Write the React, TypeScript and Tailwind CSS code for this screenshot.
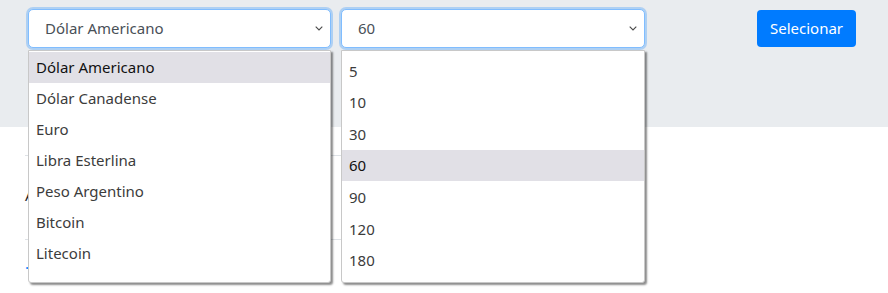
import { useState } from 'react';

const moedas = [
  'Dólar Americano',
  'Dólar Canadense',
  'Euro',
  'Libra Esterlina',
  'Peso Argentino',
  'Bitcoin',
  'Litecoin',
];

const dias = ['5', '10', '30', '60', '90', '120', '180'];

function Chevron() {
  return (
    <svg width="8" height="5" viewBox="0 0 8 5" className="shrink-0">
      <path d="M0.7 0.7 L4 4 L7.3 0.7" fill="none" stroke="#4a4a4a" strokeWidth="1.1" />
    </svg>
  );
}

interface SelectProps {
  value: string;
  options: string[];
  widthClass: string;
  listPad: string;
  itemH: string;
}

function FakeSelect({ value, options, widthClass, listPad, itemH }: SelectProps) {
  const [selected] = useState(value);
  return (
    <div className={`relative ${widthClass}`}>
      <div className="flex h-[39px] items-center justify-between rounded-[5px] border border-[#80bdff] bg-white pl-[16px] pr-[7px] text-[15px] text-[#495057] shadow-[0_0_0_2px_rgba(0,123,255,0.25)]">
        <span>{selected}</span>
        <Chevron />
      </div>
      {/* lista aberta */}
      <ul
        className={`absolute left-0 right-0 top-[41px] z-10 h-[233px] rounded-b-[3px] border border-[#c8c8c8] bg-white ${listPad} shadow-[2px_2px_2px_rgba(0,0,0,0.45)]`}
      >
        {options.map((op) => (
          <li
            key={op}
            className={`flex ${itemH} items-center pl-[7px] text-[15px] ${
              op === selected ? 'bg-[#e1e0e6] text-[#111]' : 'text-[#3c3c3c]'
            }`}
          >
            {op}
          </li>
        ))}
      </ul>
    </div>
  );
}

export default function App() {
  return (
    <div className="h-[293px] w-[888px] overflow-hidden bg-white font-['Noto_Sans',sans-serif]">
      <div className="h-[127px] bg-[#e9ecef] pt-[9px]">
        <div className="flex items-start pl-[28px]">
          <FakeSelect
            value="Dólar Americano"
            options={moedas}
            widthClass="w-[303px]"
            listPad="pt-[1px]"
            itemH="h-[31px]"
          />
          <div className="w-[10px]" />
          <FakeSelect
            value="60"
            options={dias}
            widthClass="w-[304px]"
            listPad="pt-[4px]"
            itemH="h-[31.6px]"
          />
          <button className="ml-[112px] mt-[1px] h-[37px] w-[99px] rounded-[4px] bg-[#007bff] text-[15px] text-white">
            Selecionar
          </button>
        </div>
      </div>
      {/* conteúdo por trás da lista */}
      <div className="pl-[25px] pt-[28px] text-[15px] text-[#212529]">
        <div className="w-[600px] border-t border-[#dee2e6]" />
        <div className="pt-[28px]">A</div>
        <div className="mt-[32px] w-[600px] border-t border-[#dee2e6]" />
        <div className="pt-[12px] text-[#007bff]">.</div>
      </div>
    </div>
  );
}
